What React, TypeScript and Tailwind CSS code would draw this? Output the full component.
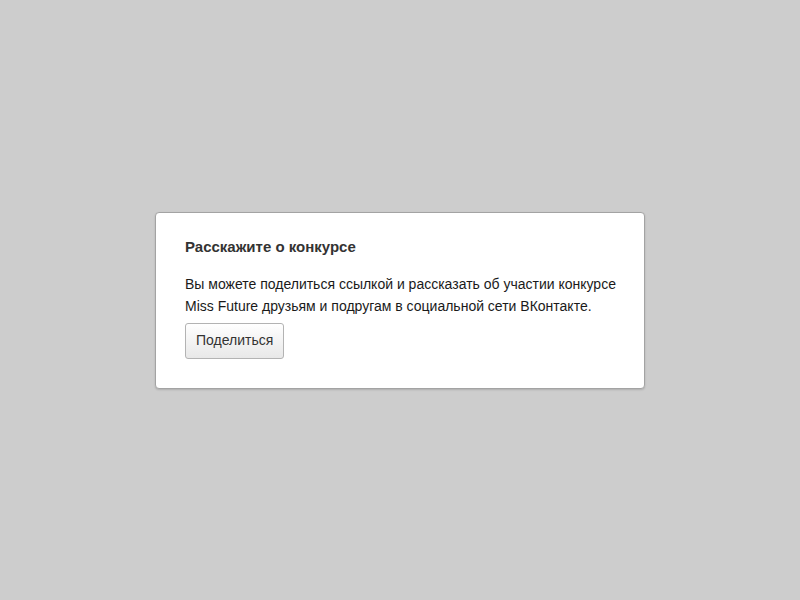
export default function App() {
  return (
    <div className="min-h-screen w-full bg-[#cdcdcd] flex items-center justify-center font-['Liberation_Sans',Arial,sans-serif]">
      <div className="w-[490px] bg-white border border-[#a3a3a3] rounded-[4px] shadow-[0_1px_2px_rgba(0,0,0,0.15)] pt-[24px] pb-[29px] pl-[29px] pr-[20px]">
        <h2 className="text-[15px] leading-[20px] font-bold text-[#333]">
          Расскажите о конкурсе
        </h2>
        <p className="mt-[16px] text-[14px] leading-[22px] text-[#1a1a1a]">
          Вы можете поделиться ссылкой и рассказать об участии конкурсе Miss
          Future друзьям и подругам в социальной сети ВКонтакте.
        </p>
        <button className="mt-[6px] h-[36px] px-[10px] text-[14px] text-[#333] border border-[#b3b3b3] rounded-[3px] bg-gradient-to-b from-white to-[#e8e8e8]">
          Поделиться
        </button>
      </div>
    </div>
  );
}
